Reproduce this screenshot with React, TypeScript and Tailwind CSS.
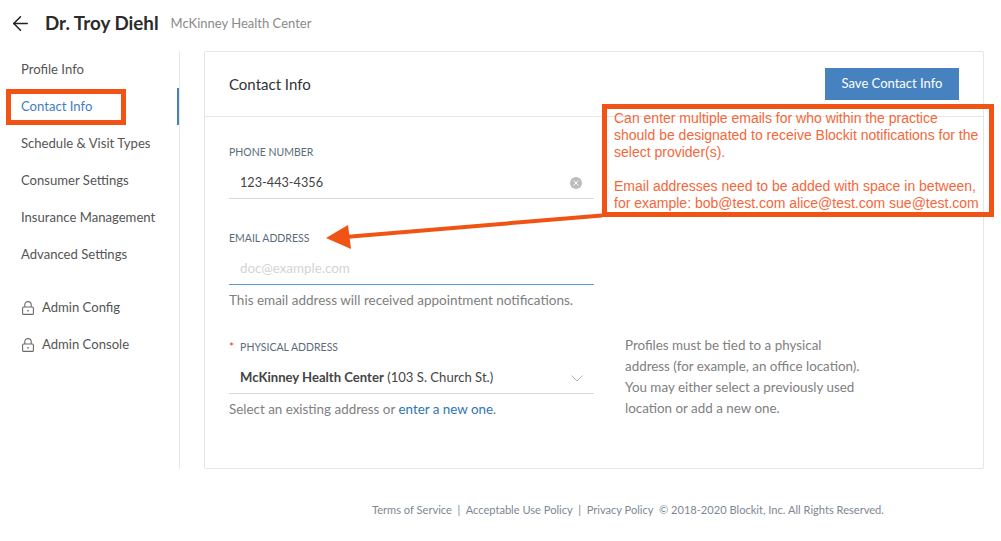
import { FC, ReactNode } from 'react';
import { ArrowLeft, X } from 'lucide-react';

const navItems = ['Profile Info', 'Contact Info', 'Schedule & Visit Types', 'Consumer Settings', 'Insurance Management', 'Advanced Settings'];
const adminItems = ['Admin Config', 'Admin Console'];

const Label: FC<{ children: ReactNode; required?: boolean }> = ({ children, required }) => (
    <div className="h-[14px] flex items-center text-[10.5px] leading-[14px] text-[#5c6b7a]">
        {required && <span className="text-[#e5392b] mr-[6px] text-[12px]">*</span>}
        {children}
    </div>
);

const LockIcon = () => (
    <svg className="mr-[8px]" width="12" height="14" viewBox="0 0 12 14" fill="none" stroke="#6b6b6b" strokeWidth="1.1">
        <rect x="0.6" y="6" width="10.8" height="7.4" rx="1" />
        <path d="M2.8 6V3.6a3.2 3 0 0 1 6.4 0V6" />
        <path d="M6 9v1.6" strokeWidth="1.4" />
    </svg>
);

export default function App() {
    return (
        <div className="relative w-[1001px] h-[541px] overflow-hidden bg-white font-['Lato',sans-serif] text-[13.1px] text-[#555]">
            {/* Header */}
            <div className="h-[51px] flex items-center pl-[9px] pb-[4px]">
                <ArrowLeft className="w-[23px] h-[23px] text-[#222]" strokeWidth={1.6} />
                <span className="ml-[13px] text-[18.8px] font-bold text-[#2b2b2b]">Dr. Troy Diehl</span>
                <span className="ml-[12px] text-[13px] text-[#8a8a8a]">McKinney Health Center</span>
            </div>

            <div className="flex">
                {/* Sidebar */}
                <div className="w-[180px] h-[418px] border-r border-[#e6e6e6]">
                    {navItems.map(item => (
                        <div
                            key={item}
                            className={`h-[37px] flex items-center pl-[21px] ${item === 'Contact Info' ? 'text-[#3f7fc1] border-r-2 border-[#4682bf]' : ''}`}
                        >
                            {item}
                        </div>
                    ))}
                    <div className="h-[16px]" />
                    {adminItems.map(item => (
                        <div key={item} className="h-[37px] flex items-center pl-[22px]">
                            <LockIcon />
                            {item}
                        </div>
                    ))}
                </div>

                {/* Card */}
                <div className="ml-[24px] w-[780px] h-[418px] border border-[#e6e6e6] rounded-[2px]">
                    <div className="h-[65px] flex items-center justify-between pl-[24px] pr-[24px] border-b border-[#e6e6e6]">
                        <span className="text-[15px] text-[#333]">Contact Info</span>
                        <button className="w-[134px] h-[32px] bg-[#4682bf] text-white text-[13px]">Save Contact Info</button>
                    </div>

                    <div className="pl-[24px] pt-[28px] flex">
                        <div className="w-[365px]">
                            <Label>PHONE NUMBER</Label>
                            <div className="mt-[7px] h-[33px] flex items-center justify-between pl-[11px] pr-[12px] pt-[1px] border-b border-[#d9d9d9] text-[12.7px] text-[#444]">
                                123-443-4356
                                <span className="w-[12px] h-[12px] rounded-full bg-[#bdbdbd] flex items-center justify-center">
                                    <X className="w-[8px] h-[8px] text-white" strokeWidth={3} />
                                </span>
                            </div>

                            <div className="mt-[32px]">
                                <Label>EMAIL ADDRESS</Label>
                            </div>
                            <div className="mt-[7px] h-[33px] flex items-center pl-[11px] border-b border-[#5b9bd5] text-[13.4px] text-[#d4d4d4]">doc@example.com</div>
                            <div className="mt-[7px] text-[13.5px] text-[#808080] leading-[16px]">This email address will received appointment notifications.</div>

                            <div className="mt-[32px]">
                                <Label required>PHYSICAL ADDRESS</Label>
                            </div>
                            <div className="mt-[7px] h-[33px] flex items-center justify-between pl-[11px] pr-[11px] pt-[2px] border-b border-[#d9d9d9] text-[#444]">
                                <span><b className="font-bold">McKinney Health Center</b> (103 S. Church St.)</span>
                                <svg width="12" height="7" viewBox="0 0 12 7" fill="none" stroke="#b5b5b5" strokeWidth="1">
                                    <path d="M0.5 0.5L6 6L11.5 0.5" />
                                </svg>
                            </div>
                            <div className="mt-[7px] text-[13.4px] text-[#808080] leading-[16px]">
                                Select an existing address or <span className="text-[#2f74b5]">enter a new one</span>.
                            </div>
                        </div>

                        <div className="ml-[31px] mt-[190px] text-[13.4px] leading-[21px] text-[#808080] whitespace-nowrap">
                            Profiles must be tied to a physical<br />
                            address (for example, an office location).<br />
                            You may either select a previously used<br />
                            location or add a new one.
                        </div>
                    </div>
                </div>
            </div>

            {/* Footer */}
            <div className="mt-[33px] pl-[372px] text-[11.1px] leading-[16px] text-[#7d8894] whitespace-nowrap">
                Terms of Service&nbsp; |&nbsp; Acceptable Use Policy&nbsp; |&nbsp; Privacy Policy&nbsp; © 2018-2020 Blockit, Inc. All Rights Reserved.
            </div>

            {/* Annotations */}
            <div className="absolute left-[6px] top-[89px] w-[120px] h-[36px] border-[5px] border-[#f05314]" />
            <div className="absolute left-[602px] top-[104px] w-[392px] h-[113px] border-[5px] border-[#f05314] pl-[7px] pt-[1px] font-['Liberation_Sans',sans-serif] text-[14px] leading-[17px] text-[#f5673a] whitespace-nowrap">
                Can enter multiple emails for who within the practice<br />
                should be designated to receive Blockit notifications for the<br />
                select provider(s).<br />
                <br />
                Email addresses need to be added with space in between,<br />
                for example: bob@test.com alice@test.com sue@test.com
            </div>
            <svg className="absolute left-[320px] top-[205px]" width="290" height="50" viewBox="0 0 290 50" fill="none">
                <path d="M282 10.5L28 31.7" stroke="#f05314" strokeWidth="4" />
                <path d="M6 33L28 20L31 44Z" fill="#f05314" />
            </svg>
        </div>
    );
}
